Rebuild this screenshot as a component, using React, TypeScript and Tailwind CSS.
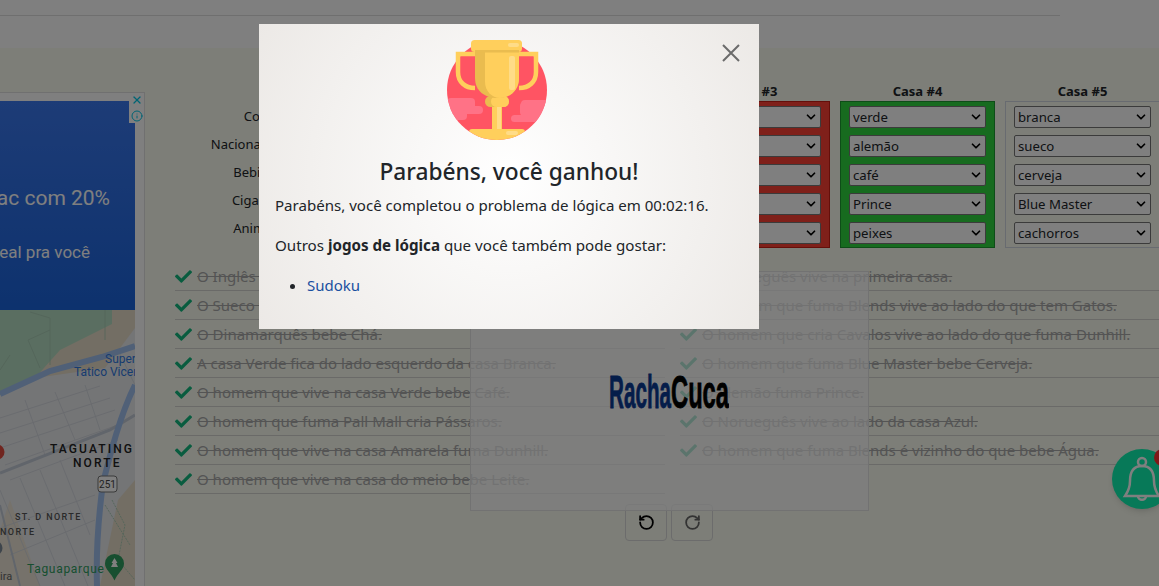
import { ChevronDown, RotateCcw, RotateCw, X, Info } from 'lucide-react';
import { FaCheck } from 'react-icons/fa';

const labels = ['Cor', 'Nacionalidade', 'Bebida', 'Cigarro', 'Animal'];

const houses = [
  { title: 'Casa #1', box: 'border-[#1c9a30] bg-[#2ed63f]', values: ['amarela', 'norueguês', 'água', 'Dunhill', 'gatos'] },
  { title: 'Casa #2', box: 'border-[#1c9a30] bg-[#2ed63f]', values: ['azul', 'dinamarquês', 'chá', 'Blends', 'cavalos'] },
  { title: 'Casa #3', box: 'border-[#c81e14] bg-[#ff4034]', values: ['vermelha', 'inglês', 'leite', 'Pall Mall', 'pássaros'] },
  { title: 'Casa #4', box: 'border-[#1c9a30] bg-[#2ed63f]', values: ['verde', 'alemão', 'café', 'Prince', 'peixes'] },
  { title: 'Casa #5', box: 'border-[#d0d6e0] bg-transparent', values: ['branca', 'sueco', 'cerveja', 'Blue Master', 'cachorros'] },
];

const leftClues = [
  'O Inglês vive na casa Vermelha.',
  'O Sueco tem Cachorros.',
  'O Dinamarquês bebe Chá.',
  'A casa Verde fica do lado esquerdo da casa Branca.',
  'O homem que vive na casa Verde bebe Café.',
  'O homem que fuma Pall Mall cria Pássaros.',
  'O homem que vive na casa Amarela fuma Dunhill.',
  'O homem que vive na casa do meio bebe Leite.',
];

const rightClues = [
  'O Norueguês vive na primeira casa.',
  'O homem que fuma Blends vive ao lado do que tem Gatos.',
  'O homem que cria Cavalos vive ao lado do que fuma Dunhill.',
  'O homem que fuma Blue Master bebe Cerveja.',
  'O Alemão fuma Prince.',
  'O Norueguês vive ao lado da casa Azul.',
  'O homem que fuma Blends é vizinho do que bebe Água.',
];

function House({ title, box, values }: { title: string; box: string; values: string[] }) {
  return (
    <div className="w-[155px] shrink-0">
      <div className="h-[20px] text-center text-[13px] leading-[20px] font-bold text-[#212529]">{title}</div>
      <div className={`flex h-[147px] flex-col gap-[7px] border pt-1 px-2 ${box}`}>
        {values.map((value) => (
          <div key={value} className="relative h-[22px]">
            <select
              defaultValue={value}
              className="h-full w-full appearance-none rounded-[2px] border border-[#767676] bg-white pl-[3px] text-[13.2px] leading-[20px] text-[#212529]"
            >
              <option>{value}</option>
            </select>
            <ChevronDown className="pointer-events-none absolute top-1 right-[3px] size-[14px] text-black" strokeWidth={3} />
          </div>
        ))}
      </div>
    </div>
  );
}

function ClueRow({ text }: { text: string }) {
  return (
    <div className="flex h-[29px] items-center gap-[5px] border-b border-[#d4d4d0]">
      <FaCheck className="size-[17px] shrink-0 text-[#12b97f]" />
      <span className="text-[15px] whitespace-nowrap text-[#a8a8a8] line-through">{text}</span>
    </div>
  );
}

function MapDrawing() {
  return (
    <svg viewBox="0 0 135 276" className="h-[276px] w-[135px]" aria-hidden>
      <rect width="135" height="276" fill="#e8eaed" />
      <path d="M0 0H135V10L105 30L60 55L35 68L0 85Z" fill="#b4dcc2" />
      <path d="M105 58L135 18V0H112V14L60 40L35 68Z" fill="#e6dcc8" />
      <path d="M118 190L135 170V276H100Z" fill="#e6dcc8" />
      <path d="M10 190L40 276H0V220Z" fill="#eee3cc" opacity="0.7" />
      <g fill="none" stroke="#a6c9b2" strokeWidth="0.8">
        <path d="M30 2L50 8V55M50 20L28 30L40 58M10 45L0 60" />
        <path d="M105 0V30" />
      </g>
      <g fill="none" stroke="#d3d6dc" strokeWidth="0.9">
        <path d="M0 108L100 76M0 123L110 88M0 138L115 100M5 155L115 116M10 170L118 130" />
        <path d="M25 90L45 145M55 82L75 130M85 75L100 120M0 180L40 276M20 168L65 276M40 160L88 276M60 150L90 225" />
        <path d="M0 218L95 185M10 245L95 210M118 40L135 75" />
        <path d="M112 190L125 215L118 250L135 270M105 195L130 235" stroke="#a6c9b2" strokeDasharray="2 1" />
      </g>
      <path d="M0 163L110 120L135 105" fill="none" stroke="#c2cad6" strokeWidth="3" />
      <path d="M0 195L20 276" fill="none" stroke="#c2cad6" strokeWidth="2" />
      <path d="M0 84L50 61L102 47L135 36" fill="none" stroke="#a0c0ee" strokeWidth="6" />
      <path d="M135 75C120 105 110 145 103 173C98 210 96 245 97 276" fill="none" stroke="#a0c0ee" strokeWidth="6" />
      <rect x="98" y="166" width="19" height="16" rx="3" fill="#fff" stroke="#777" />
      <text x="107.5" y="178" textAnchor="middle" fontSize="10" fill="#444" fontFamily="Roboto">251</text>
      <circle cx="-3" cy="142" r="7.5" fill="#e04a3f" />
      <circle cx="-5" cy="238" r="7.5" fill="#7d8a99" />
      <g fontFamily="Roboto" fontWeight="500">
        <text x="50" y="143" fontSize="12" letterSpacing="2.1" fill="#222">TAGUATING</text>
        <text x="73" y="157" fontSize="12" letterSpacing="2.1" fill="#222">NORTE</text>
        <text x="15" y="210" fontSize="9" letterSpacing="1.4" fill="#555">ST. D NORTE</text>
        <text x="0" y="225" fontSize="9" letterSpacing="1.4" fill="#555">NORTE</text>
      </g>
      <g fontFamily="Roboto" fontSize="12" fill="#2f78e0">
        <text x="105" y="53">Super</text>
        <text x="74" y="66">Tatico Vicente</text>
      </g>
      <text x="27" y="263" fontFamily="Roboto" fontSize="12" letterSpacing="0.7" fill="#2f9e60">Taguaparque</text>
      <text x="0" y="270" fontFamily="Roboto" fontSize="11" fill="#666">ira</text>
      <path d="M114.5 244a9.5 9.5 0 0 1 9.5 9.5c0 6-6 9-9.5 17c-3.5-8-9.5-11-9.5-17a9.5 9.5 0 0 1 9.5-9.5Z" fill="#2f9e60" />
      <path d="M114.5 248l3 5h-1.5l2 4h-7l2-4h-1.5Z" fill="#fff" />
    </svg>
  );
}

function Trophy() {
  return (
    <svg viewBox="0 0 100 100" className="ml-[172px] block size-[100px]" aria-hidden>
      <defs>
        <clipPath id="disc">
          <circle cx="50" cy="50" r="50" />
        </clipPath>
      </defs>
      <g clipPath="url(#disc)">
        <rect width="100" height="100" fill="#ff5463" />
        <g fill="#ff7286">
          <rect x="0" y="58" width="28" height="16" rx="4" />
          <rect x="0" y="66" width="36" height="8" rx="4" />
          <rect x="0" y="70" width="20" height="10" rx="4" />
          <rect x="74" y="60" width="30" height="8" rx="4" />
          <rect x="73" y="62" width="30" height="14" rx="4" />
          <rect x="64" y="75" width="40" height="7" rx="3.5" />
        </g>
        <rect x="22" y="89" width="56" height="14" rx="3" fill="#ffcf5c" />
        <rect x="59" y="91" width="12" height="4" rx="2" fill="#ffdc88" />
      </g>
      <path d="M28 14H11V32C11 42 18 48 28 48" fill="none" stroke="#ffcf5c" strokeWidth="4.5" />
      <path d="M72 14H89V32C89 42 82 48 72 48" fill="none" stroke="#ffcf5c" strokeWidth="4.5" />
      <rect x="45" y="66" width="10" height="23" fill="#ffcf5c" />
      <rect x="50" y="66" width="4" height="23" fill="#ffdc88" />
      <rect x="38" y="56" width="24" height="11" rx="5.5" fill="#eabc4f" />
      <rect x="44" y="56" width="18" height="11" rx="5.5" fill="#ffcf5c" />
      <path d="M28 12H72V38C72 51 62 58 50 58C38 58 28 51 28 38Z" fill="#eabc4f" />
      <path d="M38 12H72V38C72 51 62 58 53 58C45 58 38 51 38 42Z" fill="#ffcf5c" />
      <rect x="62" y="16" width="6" height="34" rx="2" fill="#ffdc88" />
      <rect x="24" y="0" width="51" height="12" rx="3.5" fill="#ffcf5c" />
      <rect x="28" y="10" width="44" height="2.5" fill="#eabc4f" />
      <rect x="61" y="3" width="11" height="4" rx="2" fill="#ffdc88" />
    </svg>
  );
}

export default function App() {
  return (
    <div className="relative h-[586px] w-[1159px] overflow-hidden bg-[#fafcf0] font-['Noto_Sans',sans-serif] text-[14px] text-[#212529]">
      <header className="h-[48px] bg-white pt-[15px]">
        <div className="mr-[99px] border-t border-[#dedede]" />
      </header>

      <div className="flex">
        <aside className="mt-[44px] h-[494px] w-[145px] shrink-0 border-r border-t border-[#e0e0e0] bg-white pt-2">
          <div className="relative w-[135px] overflow-hidden">
            <div className="flex h-[209px] flex-col items-end bg-gradient-to-b from-[#3a78ee] to-[#1a64dc] font-['Roboto',sans-serif] text-white">
              <div className="mt-[82px] mr-[25px] whitespace-nowrap text-[21px]">iMac com 20%</div>
              <div className="mt-[25px] mr-[45px] whitespace-nowrap text-[17px]">ideal pra você</div>
            </div>
            <MapDrawing />
          </div>
          <div className="absolute top-[94px] left-[129px] flex h-[29px] w-[15px] flex-col items-center bg-white text-[#00c8e8]">
            <X className="size-[12px]" strokeWidth={2.5} />
            <Info className="mt-[4px] size-[12px]" strokeWidth={2} />
          </div>
        </aside>

        <main className="ml-[30px] w-[990px] shrink-0 pt-[33px]">
          <div className="flex gap-[10px]">
            <div className="w-[160px] shrink-0 pt-[21px]">
              {labels.map((label) => (
                <div key={label} className="h-[28px] pr-[1px] text-center text-[13px] leading-[28px]">
                  {label}
                </div>
              ))}
            </div>
            {houses.map((house) => (
              <House key={house.title} {...house} />
            ))}
          </div>

          <div className="mt-[14px] grid grid-cols-[490px_485px] gap-x-[15px]">
            <div>
              {leftClues.map((clue) => (
                <ClueRow key={clue} text={clue} />
              ))}
            </div>
            <div>
              {rightClues.map((clue) => (
                <ClueRow key={clue} text={clue} />
              ))}
            </div>
          </div>

          <div className="mt-[10px] flex justify-center gap-1 pr-[2px]">
            <button type="button" className="flex h-[37px] w-[42px] items-center justify-center rounded border border-[#d8d8d8] text-black">
              <RotateCcw className="size-[17px]" strokeWidth={2.5} />
            </button>
            <button type="button" className="flex h-[37px] w-[42px] items-center justify-center rounded border border-[#d8d8d8] text-[#666]">
              <RotateCw className="size-[17px]" strokeWidth={2.5} />
            </button>
          </div>
        </main>
      </div>

      {/* loader on top of the clues */}
      <div className="absolute top-[271px] left-[470px] flex h-[240px] w-[399px] items-center justify-center border border-[#e4e4e4] bg-[#fdfdff]/70">
        <svg viewBox="0 0 120 38" className="mt-[1px] mr-[2px] h-[38px] w-[120px]" role="img" aria-label="RachaCuca">
          <text x="0" y="35" fontFamily="Liberation Sans" fontWeight="700" fontSize="46" textLength="62" lengthAdjust="spacingAndGlyphs" fill="#0b3a94" stroke="#0b3a94" strokeWidth="0.8">
            Racha
          </text>
          <text x="62" y="35" fontFamily="Liberation Sans" fontWeight="700" fontSize="46" textLength="58" lengthAdjust="spacingAndGlyphs" fill="#000" stroke="#000" strokeWidth="0.8">
            Cuca
          </text>
        </svg>
      </div>

      <div className="absolute top-[449px] left-[1112px] size-[60px] rounded-full bg-[#0ef3b0] shadow-md">
        <svg viewBox="0 0 60 60" className="size-[60px]" fill="none" stroke="white" strokeWidth="2.5" aria-hidden>
          <circle cx="30" cy="13" r="4" />
          <path d="M30 17C21 17 18 24 18 32C18 40 15 44 13 47H47C45 44 42 40 42 32C42 24 39 17 30 17Z" />
          <path d="M26 47C26 52 34 52 34 47" />
        </svg>
        <span className="absolute top-0 left-[42px] size-[17px] rounded-full bg-[#ff3030]" />
      </div>

      {/* modal backdrop */}
      <div className="absolute inset-0 bg-black/50">
        <div className="absolute top-[24px] left-[259px] h-[305px] w-[500px] bg-[radial-gradient(circle,#ffffff,#ece9e6)] px-4 pt-4">
          <button type="button" className="absolute top-[19px] right-[18px] text-[#6b6b6b]" aria-label="Fechar">
            <svg viewBox="0 0 20 20" className="size-[20px]" fill="none" stroke="currentColor" strokeWidth="2">
              <path d="M2 2L18 18M18 2L2 18" />
            </svg>
          </button>
          <Trophy />
          <h2 className="mt-[17px] text-center text-[22.7px] leading-[29px] font-medium text-[#212529]">Parabéns, você ganhou!</h2>
          <p className="mt-[7px] mb-4 text-[15.07px] leading-[24px]">Parabéns, você completou o problema de lógica em 00:02:16.</p>
          <p className="mb-4 text-[15.15px] leading-[24px]">
            Outros <strong>jogos de lógica</strong> que você também pode gostar:
          </p>
          <ul className="list-disc pl-8 text-[15px] leading-[24px]">
            <li>
              <a href="#sudoku" className="text-[#1a4fa0]">
                Sudoku
              </a>
            </li>
          </ul>
        </div>
      </div>
    </div>
  );
}
